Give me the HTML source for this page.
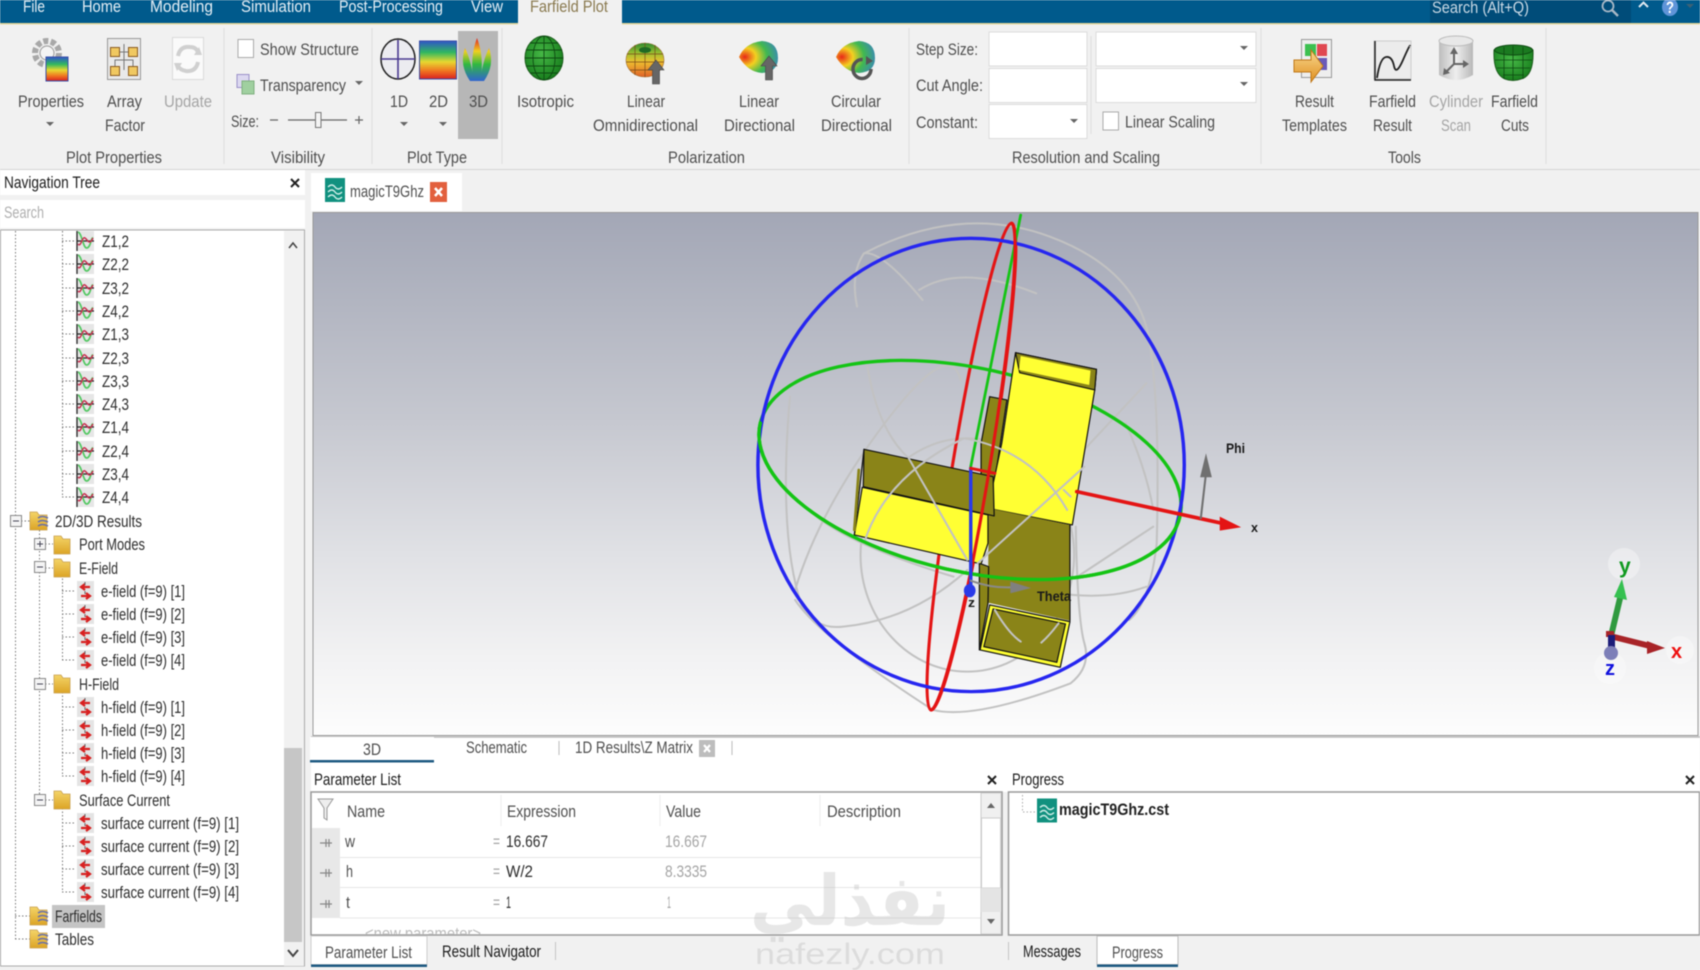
<!DOCTYPE html>
<html><head><meta charset="utf-8"><title>Farfield Plot</title>
<style>
html,body{margin:0;padding:0;width:1700px;height:970px;overflow:hidden;background:#f1f1f1}
svg{display:block;filter:blur(.4px)}
text{font-family:"Liberation Sans","DejaVu Sans",sans-serif;font-size:16.5px;fill:#4f4f4f}
.m{fill:#e4eef5}.d{fill:#2e2e2e}.g{fill:#a5a5a5}.k{fill:#1c1c1c}
</style></head><body>
<svg xmlns="http://www.w3.org/2000/svg" width="1700" height="970" viewBox="0 0 1700 970">
<defs>
<linearGradient id="vp" x1="0" y1="0" x2="0" y2="1"><stop offset="0" stop-color="#a3a7b6"/><stop offset=".4" stop-color="#c6c8d0"/><stop offset=".65" stop-color="#e0e1e5"/><stop offset=".85" stop-color="#f2f2f3"/><stop offset="1" stop-color="#fdfdfd"/></linearGradient>
<linearGradient id="rb" x1="0" y1="0" x2="0" y2="1"><stop offset="0" stop-color="#2f55c8"/><stop offset=".3" stop-color="#30b860"/><stop offset=".55" stop-color="#e8d830"/><stop offset=".8" stop-color="#f07020"/><stop offset="1" stop-color="#d82020"/></linearGradient>
<linearGradient id="lobe" gradientUnits="userSpaceOnUse" x1="0" y1="38" x2="0" y2="82"><stop offset="0" stop-color="#e02020"/><stop offset=".3" stop-color="#f0d020"/><stop offset=".6" stop-color="#30b840"/><stop offset="1" stop-color="#3060d8"/></linearGradient>
<radialGradient id="sph" cx=".45" cy=".4" r=".65"><stop offset="0" stop-color="#46b846"/><stop offset="1" stop-color="#157a1a"/></radialGradient>
<radialGradient id="blob" cx=".15" cy=".5" r=".95"><stop offset="0" stop-color="#e82818"/><stop offset=".3" stop-color="#f4d020"/><stop offset=".6" stop-color="#40b850"/><stop offset="1" stop-color="#3a80c8"/></radialGradient>
<linearGradient id="omni" x1="0" y1="0" x2="0" y2="1"><stop offset="0" stop-color="#2c8a30"/><stop offset=".3" stop-color="#9cc030"/><stop offset=".55" stop-color="#eec030"/><stop offset="1" stop-color="#e06028"/></linearGradient>
<linearGradient id="fold" x1="0" y1="0" x2="0" y2="1"><stop offset="0" stop-color="#f4d468"/><stop offset="1" stop-color="#dca426"/></linearGradient>
<linearGradient id="cyl" x1="0" y1="0" x2="1" y2="0"><stop offset="0" stop-color="#bdbdbd"/><stop offset=".5" stop-color="#eee"/><stop offset="1" stop-color="#b8b8b8"/></linearGradient>
<linearGradient id="orng" x1="0" y1="0" x2="0" y2="1"><stop offset="0" stop-color="#f8d890"/><stop offset="1" stop-color="#e09020"/></linearGradient>
<g id="zi"><rect x="-8" y="-10" width="17" height="20" fill="#e6e6e6"/><path d="M-8-10V10M-8 0H9" stroke="#222" stroke-width="1.3" fill="none"/><path d="M-7-9C-3-8-2 8 2 7S6-4 8-3" stroke="#50c860" stroke-width="1.6" fill="none"/><path d="M-7 3C-4 7-3-5 0-3S4 5 8-3" stroke="#c83050" stroke-width="1.5" fill="none"/></g>
<g id="fi"><rect x="-8" y="-10" width="17" height="20" fill="#e4e4e4"/><path d="M5-4H-3M0-7L-4-4L0-1" stroke="#d82020" stroke-width="2.2" fill="none"/><path d="M-4 5H4M1 2L5 5L1 8" stroke="#d82020" stroke-width="2.2" fill="none"/><path d="M0-9V-6M0 0V3" stroke="#666" stroke-width="1"/></g>
<g id="fo"><path d="M-8-9H-1L1-6H8V9H-8Z" fill="url(#fold)" stroke="#c8a050" stroke-width=".8"/></g>
<g id="fr"><path d="M-9-9H-2L0-6H8V9H-9Z" fill="url(#fold)" stroke="#c8a050" stroke-width=".8"/><path d="M-1-3Q3-6 9-3M-1 1Q3-2 9 1M-1 5Q3 2 9 5" stroke="#6a70a8" stroke-width="1.6" fill="none"/></g>
<g id="teal"><rect x="-10" y="-12" width="20" height="24" fill="#11917f"/><path d="M-7-3Q-3-7 0-3T7-3M-7 2Q-3-2 0 2T7 2M-7 7Q-3 3 0 7T7 7" stroke="#cfeee8" stroke-width="1.4" fill="none"/></g>
<path id="ar" d="M-4-2H4L0 2Z" fill="#666"/>
<path id="up" d="M0-12L8-2H3.500V12H-3.500V-2H-8Z" fill="#666" stroke="#444" stroke-width=".6"/>
</defs>

<rect width="1700" height="970" fill="#f1f1f1"/>
<!-- title bar -->
<rect width="1700" height="23" fill="#005a8c"/>
<rect y="23" width="1700" height="1.500" fill="#e4d79c"/>
<rect x="1430" width="201" height="23" fill="#004c79"/>
<rect x="518" width="104" height="25" fill="#f1f1f1"/>
<text class="m" x="23" y="12" textLength="22" lengthAdjust="spacingAndGlyphs">File</text>
<text class="m" x="82" y="12" textLength="39" lengthAdjust="spacingAndGlyphs">Home</text>
<text class="m" x="150" y="12" textLength="63" lengthAdjust="spacingAndGlyphs">Modeling</text>
<text class="m" x="241" y="12" textLength="70" lengthAdjust="spacingAndGlyphs">Simulation</text>
<text class="m" x="339" y="12" textLength="104" lengthAdjust="spacingAndGlyphs">Post-Processing</text>
<text class="m" x="471" y="12" textLength="32" lengthAdjust="spacingAndGlyphs">View</text>
<text x="530" y="12" textLength="78" lengthAdjust="spacingAndGlyphs" style="fill:#8a7a50">Farfield Plot</text>
<text x="1432" y="13" textLength="97" lengthAdjust="spacingAndGlyphs" style="fill:#c8d8e4">Search (Alt+Q)</text>
<circle cx="1608" cy="6" r="5.500" fill="none" stroke="#a8b8c6" stroke-width="1.800"/><path d="M1612 10L1618 16" stroke="#a8b8c6" stroke-width="2.400"/>
<path d="M1639 7L1643.500 2.500L1648 7" stroke="#e0e8f0" stroke-width="2" fill="none"/>
<ellipse cx="1670" cy="7" rx="8" ry="9" fill="#5f94d8"/><text x="1666" y="13" textLength="8" lengthAdjust="spacingAndGlyphs" style="fill:#fff;font-weight:bold">?</text>
<use href="#ar" x="1690" y="6" opacity=".6"/>

<!-- ribbon bottom + separators -->
<rect y="169" width="1700" height="1" fill="#d4d4d4"/>
<path d="M224 28V164M372 28V164M502 28V164M909 28V164M1261 28V164M1546 28V164M1091 36V134" stroke="#dcdcdc" stroke-width="1"/>

<!-- Properties -->
<circle cx="47" cy="53" r="12" fill="#eee" stroke="#a8a8a8" stroke-width="6" stroke-dasharray="5 2.500"/>
<circle cx="47" cy="53" r="7" fill="#f4f4f4" stroke="#999" stroke-width="1"/>
<rect x="46" y="57" width="22" height="24" fill="url(#rb)" stroke="#3a4fa8" stroke-width="1"/>
<text x="18" y="107" textLength="66" lengthAdjust="spacingAndGlyphs">Properties</text><use href="#ar" x="50" y="124"/>
<!-- Array -->
<rect x="107.500" y="38.500" width="33" height="41" fill="#e9e9e9" stroke="#999"/>
<path d="M124 44V70M115 52H133M115 70V60H133V70" stroke="#777" fill="none"/>
<g fill="#f0c860" stroke="#8a5a20"><rect x="110.500" y="47.500" width="9" height="9"/><rect x="128.500" y="47.500" width="9" height="9"/><rect x="110.500" y="66.500" width="9" height="9"/><rect x="128.500" y="66.500" width="9" height="9"/></g>
<text x="107" y="107" textLength="35" lengthAdjust="spacingAndGlyphs">Array</text><text x="105" y="131" textLength="40" lengthAdjust="spacingAndGlyphs">Factor</text>
<!-- Update -->
<rect x="172.500" y="37.500" width="31" height="42" fill="#fafafa" stroke="#dadada"/>
<path d="M178 56Q180 46 190 47Q196 47 198 52M198 62Q196 72 186 71Q180 70 178 66" stroke="#d0d0d0" stroke-width="4" fill="none"/>
<path d="M194 55L202 55L199 47ZM182 63L174 63L177 71Z" fill="#d0d0d0"/>
<text class="g" x="164" y="107" textLength="48" lengthAdjust="spacingAndGlyphs">Update</text>
<!-- Visibility -->
<rect x="238" y="39.500" width="15.500" height="18" fill="#fff" stroke="#aaa"/>
<text x="260" y="55" textLength="99" lengthAdjust="spacingAndGlyphs">Show Structure</text>
<rect x="237" y="74.500" width="12" height="13" fill="#dcd8f0" stroke="#9a90c8"/><rect x="242" y="81" width="12" height="13" fill="#a0d0a0" stroke="#80b080"/>
<text x="260" y="91" textLength="86" lengthAdjust="spacingAndGlyphs">Transparency</text><use href="#ar" x="359" y="83"/>
<text x="231" y="127" textLength="28" lengthAdjust="spacingAndGlyphs">Size:</text>
<path d="M270 120H278M288 120H347M355 120H363M359 116V124" stroke="#666" stroke-width="1.200"/>
<rect x="315.500" y="112.500" width="5.500" height="15" fill="#f4f4f4" stroke="#777"/>
<text x="271" y="163" textLength="54" lengthAdjust="spacingAndGlyphs">Visibility</text>
<text x="66" y="163" textLength="96" lengthAdjust="spacingAndGlyphs">Plot Properties</text>
<!-- Plot type -->
<rect x="458" y="31" width="40" height="108" fill="#b7b7b7"/>
<ellipse cx="398" cy="59" rx="17" ry="20" fill="#ececf0" stroke="#222" stroke-width="1.500"/>
<path d="M381 59H415M398 40V79" stroke="#4a3a90" stroke-width="1.600"/>
<rect x="419.500" y="41" width="37" height="38" fill="url(#rb)" stroke="#3a4fa8"/>
<g fill="url(#lobe)"><path d="M465 48Q471 60 474 81H470Q459 65 465 48Z"/><path d="M489 48Q483 60 480 81H484Q495 65 489 48Z"/><path d="M477 38Q484 56 481 81H473Q470 56 477 38Z"/></g>
<text x="390" y="107" textLength="18" lengthAdjust="spacingAndGlyphs">1D</text><use href="#ar" x="404" y="124"/>
<text x="429" y="107" textLength="19" lengthAdjust="spacingAndGlyphs">2D</text><use href="#ar" x="443" y="124"/>
<text x="469" y="107" textLength="19" lengthAdjust="spacingAndGlyphs">3D</text>
<text x="407" y="163" textLength="60" lengthAdjust="spacingAndGlyphs">Plot Type</text>
<!-- Polarization -->
<ellipse cx="544" cy="58" rx="19" ry="22" fill="url(#sph)" stroke="#1c5c1c"/>
<g fill="none" stroke="#0e4a12" stroke-width=".9"><ellipse cx="544" cy="58" rx="11" ry="22"/><path d="M544 36V80M526 50H562M525 58H563M526 66H562M530 43H558M530 73H558"/></g>
<text x="517" y="107" textLength="57" lengthAdjust="spacingAndGlyphs">Isotropic</text>
<ellipse cx="645" cy="60" rx="19" ry="17" fill="url(#omni)" stroke="#a07030" stroke-width=".6"/>
<path d="M627 54H663M626 62H664M630 70H660M635 45V75M645 43V77M655 45V75" stroke="#7a4a18" stroke-width=".7"/>
<ellipse cx="645" cy="50" rx="6" ry="3" fill="#1f6a24"/>
<use href="#up" transform="translate(656 72)"/>
<text x="627" y="107" textLength="38" lengthAdjust="spacingAndGlyphs">Linear</text><text x="593" y="131" textLength="105" lengthAdjust="spacingAndGlyphs">Omnidirectional</text>
<path d="M739 57Q745 43 762 41Q778 42 778 58Q778 72 762 73Q748 72 739 57Z" fill="url(#blob)"/>
<use href="#up" transform="translate(769 68)"/>
<text x="739" y="107" textLength="40" lengthAdjust="spacingAndGlyphs">Linear</text><text x="724" y="131" textLength="71" lengthAdjust="spacingAndGlyphs">Directional</text>
<path d="M836 57Q842 43 859 41Q875 42 875 58Q875 72 859 73Q845 72 836 57Z" fill="url(#blob)"/>
<ellipse cx="862" cy="69" rx="9" ry="9.500" fill="none" stroke="#555" stroke-width="3.500" stroke-dasharray="44 16"/><path d="M866 56L873 61L866 65Z" fill="#555"/>
<text x="831" y="107" textLength="50" lengthAdjust="spacingAndGlyphs">Circular</text><text x="821" y="131" textLength="71" lengthAdjust="spacingAndGlyphs">Directional</text>
<text x="668" y="163" textLength="77" lengthAdjust="spacingAndGlyphs">Polarization</text>
<!-- Resolution -->
<text x="916" y="55" textLength="62" lengthAdjust="spacingAndGlyphs">Step Size:</text>
<text x="916" y="91" textLength="67" lengthAdjust="spacingAndGlyphs">Cut Angle:</text>
<text x="916" y="128" textLength="62" lengthAdjust="spacingAndGlyphs">Constant:</text>
<g fill="#fff" stroke="#dcdcdc"><rect x="989" y="32" width="98" height="34"/><rect x="989" y="68.500" width="98" height="34"/><rect x="989" y="104.500" width="98" height="34"/><rect x="1096" y="32" width="160" height="34"/><rect x="1096" y="68.500" width="160" height="34"/></g>
<use href="#ar" x="1074" y="121"/><use href="#ar" x="1244" y="48"/><use href="#ar" x="1244" y="84"/>
<rect x="1103" y="112" width="15.500" height="18" fill="#fff" stroke="#aaa"/>
<text x="1125" y="127.500" textLength="90" lengthAdjust="spacingAndGlyphs">Linear Scaling</text>
<text x="1012" y="163" textLength="148" lengthAdjust="spacingAndGlyphs">Resolution and Scaling</text>
<!-- Tools -->
<g transform="translate(6 0)">
<rect x="1295.500" y="39.500" width="30" height="38" fill="#eee" stroke="#999"/>
<rect x="1299" y="44" width="11" height="12" fill="#3cc050"/><rect x="1311" y="44" width="10" height="12" fill="#e04850"/><rect x="1311" y="58" width="10" height="12" fill="#6a5ab8"/>
<path d="M1288 60H1305V50L1317 66L1305 82V72H1288Z" fill="url(#orng)" stroke="#c07818"/>
</g>
<text x="1295" y="107" textLength="39" lengthAdjust="spacingAndGlyphs">Result</text><text x="1282" y="131" textLength="65" lengthAdjust="spacingAndGlyphs">Templates</text>
<g transform="translate(9 0)">
<rect x="1365" y="41" width="37" height="38" fill="#ececec" stroke="#ccc"/>
<path d="M1366 41V80H1402" stroke="#222" stroke-width="1.500" fill="none"/>
<path d="M1368 78Q1371 58 1377 57T1385 66T1394 60T1401 46" stroke="#222" stroke-width="1.800" fill="none"/>
</g>
<text x="1369" y="107" textLength="47" lengthAdjust="spacingAndGlyphs">Farfield</text><text x="1373" y="131" textLength="39" lengthAdjust="spacingAndGlyphs">Result</text>
<g transform="translate(11 0)">
<path d="M1428 41V75Q1445 85 1462 75V41Z" fill="url(#cyl)"/><ellipse cx="1445" cy="41" rx="17" ry="5" fill="#e8e8e8" stroke="#bbb"/>
<path d="M1443 50V64L1434 73M1443 64H1454" stroke="#666" stroke-width="2" fill="none"/><path d="M1443 47L1439 54H1447ZM1458 64L1452 60V68ZM1432 75L1433 68L1439 73Z" fill="#666"/>
</g>
<text class="g" x="1429" y="107" textLength="54" lengthAdjust="spacingAndGlyphs">Cylinder</text><text class="g" x="1441" y="131" textLength="30" lengthAdjust="spacingAndGlyphs">Scan</text>
<g transform="translate(13 0)">
<path d="M1481 50Q1500 42 1520 50Q1521 76 1508 79Q1500 82 1492 79Q1480 74 1481 50Z" fill="url(#sph)" stroke="#1c5c1c"/>
<ellipse cx="1500.500" cy="50" rx="19" ry="5" fill="#1b7a20" stroke="#0e4a12"/>
<path d="M1482 60H1519M1484 68H1517M1490 75H1511M1491 47V79M1500 46V80M1510 47V79" stroke="#0e4a12" stroke-width=".8"/>
</g>
<text x="1491" y="107" textLength="47" lengthAdjust="spacingAndGlyphs">Farfield</text><text x="1501" y="131" textLength="28" lengthAdjust="spacingAndGlyphs">Cuts</text>
<text x="1388" y="163" textLength="33" lengthAdjust="spacingAndGlyphs">Tools</text>

<!-- nav header -->
<rect x="0" y="170" width="305" height="25" fill="#fff"/>
<text class="k" x="4" y="188" textLength="96" lengthAdjust="spacingAndGlyphs">Navigation Tree</text>
<path d="M291 179L299 187M299 179L291 187" stroke="#222" stroke-width="2"/>
<rect x="0" y="200" width="305" height="28" fill="#fff"/>
<text x="4" y="218" textLength="40" lengthAdjust="spacingAndGlyphs" style="fill:#b0b0b0">Search</text>
<!-- doc tab -->
<rect x="311" y="173" width="151" height="38" fill="#fff"/>
<use href="#teal" x="335" y="190"/>
<text x="350" y="197" textLength="74" lengthAdjust="spacingAndGlyphs">magicT9Ghz</text>
<rect x="430" y="182" width="17" height="20" fill="#e2603e"/><path d="M435 188L442 196M442 188L435 196" stroke="#fff" stroke-width="2.500"/>

<!-- viewport -->
<rect x="313" y="212.500" width="1385" height="523" fill="url(#vp)" stroke="#999"/>
<rect x="311" y="736.500" width="1389" height="31.500" fill="#fff"/>
<path d="M311 737H1700" stroke="#bbb" stroke-width="1.500"/>

<g transform="translate(740 210) scale(.3444 .3333)" fill="none" stroke-linecap="round">
 <g stroke="#c2c2c2" stroke-width="6">
  <ellipse cx="660" cy="1035" rx="310" ry="350"/>
  <path d="M340 290Q320 190 360 130Q410 120 530 270M520 240Q640 160 860 250M360 130Q640-20 900 80T1190 400M1190 400Q1220 600 1210 1000Q1190 1180 1130 1230"/>
  <path d="M160 1170Q230 1280 560 1500Q680 1530 960 1420Q1020 1370 1000 1300T975 950"/>
  <path d="M145 560Q110 980 180 1190Q220 1260 300 1250Q500 1230 660 1080"/>
  <path d="M370 470Q400 660 490 745T660 1050M690 1060L1180 520M160 1140Q230 900 420 640T640 510M620 1100Q300 1000 200 900M980 1100L1200 950"/>
  <path d="M690 1090Q1000 1200 1180 1130M1120 640Q1180 780 1200 900"/>
 </g>
 <ellipse cx="672" cy="770" rx="55" ry="740" transform="rotate(9.100 672 770)" stroke="#e41414" stroke-width="9"/>
 <ellipse cx="668" cy="780" rx="625" ry="305" transform="rotate(13 668 780)" stroke="#14c414" stroke-width="10"/>
 <path d="M815 15L670 770" stroke="#14c414" stroke-width="8"/>
 <ellipse cx="671" cy="765" rx="619" ry="680" stroke="#2626f0" stroke-width="10"/>

 <g stroke="#111" stroke-width="3.500" stroke-linejoin="round">
  <path d="M725 560L775 570L730 880L700 830L700 700Z" fill="#8a8418"/>
  <path d="M800 428L1035 478L1030 540L965 945L720 895L760 700Z" fill="#ffff33"/>
  <path d="M800 428L812 488L1030 540L1035 478Z" fill="#8a8418"/>
  <path d="M815 438L1018 482L1014 525L810 480Z" fill="#ffff33" stroke="none"/>
  <path d="M722 895L958 945L958 1232L720 1178Z" fill="#8a8418" stroke="none"/>
  <path d="M958 945V1232" fill="none"/>
  <path d="M695 1060L722 1070L720 1180L695 1320Z" fill="#8a8418"/>
  <path d="M725 1185L958 1235L930 1372L697 1320Z" fill="#ffff33"/>
  <path d="M735 1197L945 1242L920 1357L708 1310Z" fill="#8a8418"/>
  <path d="M360 718L735 800L738 918L358 830Z" fill="#8a8418"/>
  <path d="M355 832L720 915L720 1000L700 1062L332 975Z" fill="#ffff33"/>
  <path d="M360 718L332 975" fill="none"/>
  <path d="M345 780L332 960" stroke="#8a8418" stroke-width="8"/>
 </g>
 <g stroke="#c2c2c2" stroke-width="6">
 <path d="M740 1200Q780 1270 815 1295M875 1298Q900 1275 925 1240M490 745L660 1050M690 1060L1000 770M940 840L960 860"/>
 <path d="M360 1000Q420 800 650 685Q850 720 950 900"/>
 </g>
 <path d="M789 40A55 740 9.100 0 1 555 1500" stroke="#e41414" stroke-width="9"/>
 <path d="M59 639A625 305 13 0 0 1277 921" stroke="#14c414" stroke-width="10"/>
 <path d="M670 775V1140" stroke="#2a3ae8" stroke-width="10"/>
 <path d="M670 775L740 790" stroke="#e41414" stroke-width="9"/>
 <ellipse cx="667" cy="1142" rx="17" ry="20" fill="#2a3ae8"/>
 <path d="M978 845L1400 940" stroke="#e41414" stroke-width="11"/>
 <path d="M1393 920L1455 952L1393 962Z" fill="#e41414"/>
 <path d="M1338 925Q1345 860 1353 790" stroke="#707070" stroke-width="6"/>
 <path d="M1353 730L1370 802H1336Z" fill="#707070"/>
 <path d="M670 1112Q730 1135 790 1132" stroke="#8a8a8a" stroke-width="6"/>
 <path d="M845 1134L785 1115V1150Z" fill="#808080"/>
</g>
<text x="1226" y="453" textLength="19" lengthAdjust="spacingAndGlyphs" style="font-size:14px;font-weight:bold;fill:#1a1a1a">Phi</text>
<text x="1251" y="532" textLength="7" lengthAdjust="spacingAndGlyphs" style="font-size:13px;font-weight:bold;fill:#1a1a1a">x</text>
<text x="1037" y="601" textLength="34" lengthAdjust="spacingAndGlyphs" style="font-size:14px;font-weight:bold;fill:#1a1a1a">Theta</text>
<text x="968" y="607" textLength="7" lengthAdjust="spacingAndGlyphs" style="font-size:13px;font-weight:bold;fill:#1a1a1a">z</text>

<!-- gizmo -->
<circle cx="1624" cy="564" r="16" fill="#fff" opacity=".35"/><circle cx="1680" cy="650" r="14" fill="#fff" opacity=".35"/><circle cx="1610" cy="668" r="16" fill="#fff" opacity=".3"/>
<path d="M1611 636L1622 590" stroke="#2f9a3f" stroke-width="6"/><path d="M1622 579L1627 600L1614 597Z" fill="#35c050"/>
<path d="M1610 636L1650 646" stroke="#a82428" stroke-width="6"/><path d="M1665 648L1647 641V654Z" fill="#a82428"/>
<rect x="1606" y="631" width="8" height="6" fill="#a82428"/><rect x="1608" y="635" width="7" height="14" fill="#1c1c78"/>
<circle cx="1611" cy="653" r="7" fill="#7d7fb8"/>
<text x="1619" y="573" style="font-size:21px;font-weight:bold;fill:#109a20">y</text>
<text x="1671" y="658" style="font-size:20px;font-weight:bold;fill:#ee1010">x</text>
<text x="1605" y="675" style="font-size:20px;font-weight:bold;fill:#1010dd">z</text>

<!-- 3D tabs -->
<rect x="310" y="737" width="124" height="23" fill="#fff"/>
<rect x="310" y="760" width="124" height="2.500" fill="#1e5a82"/>
<text x="363" y="755" textLength="18" lengthAdjust="spacingAndGlyphs">3D</text>
<text x="466" y="753" textLength="61" lengthAdjust="spacingAndGlyphs">Schematic</text>
<path d="M559 741V755M732 741V755" stroke="#bbb"/>
<text x="575" y="753" textLength="118" lengthAdjust="spacingAndGlyphs">1D Results\Z Matrix</text>
<rect x="699" y="740" width="16" height="17" fill="#bdbdbd"/><path d="M704 745L710 752M710 745L704 752" stroke="#fff" stroke-width="2.200"/>

<!-- Navigation tree panel -->
<rect x=".5" y="230" width="304" height="736" fill="#fff" stroke="#aaa"/>
<rect x="284" y="231" width="20" height="735" fill="#f1f1f1"/>
<rect x="284" y="748" width="18" height="194" fill="#c6c6c6"/>
<path d="M289 248L293 243L297 248" stroke="#444" stroke-width="1.500" fill="none"/>
<path d="M288 950L293 956L298 950" stroke="#444" stroke-width="2" fill="none"/>
<g stroke="#777" stroke-dasharray="1.500 2" stroke-width="1" fill="none">
 <path d="M15.500 231V939M39.500 530V799M62.500 231V497M62.500 575V660M62.500 692V776M62.500 808V892"/>
 <path d="M62 241H76M62 264H76M62 288H76M62 311H76M62 334H76M62 358H76M62 381H76M62 404H76M62 427H76M62 451H76M62 474H76M62 497H76"/>
 <path d="M62 591H76M62 614H76M62 637H76M62 660H76M62 707H76M62 730H76M62 753H76M62 776H76M62 823H76M62 846H76M62 869H76M62 892H76"/>
 <path d="M21 521H30M45 544H53M45 568H53M45 684H53M45 800H53M15 916H30M15 939H30"/>
</g>
<g fill="#f4f4f4" stroke="#888">
 <rect x="10.500" y="515.500" width="11" height="11"/><rect x="34.500" y="538.500" width="11" height="11"/><rect x="34.500" y="561.500" width="11" height="11"/><rect x="34.500" y="678.500" width="11" height="11"/><rect x="34.500" y="794.500" width="11" height="11"/>
</g>
<path d="M13 521H19M37 544H43M40 541V547M37 567H43M37 684H43M37 800H43" stroke="#445" stroke-width="1"/>

<g><use href="#zi" x="85" y="241"/><use href="#zi" x="85" y="264"/><use href="#zi" x="85" y="288"/><use href="#zi" x="85" y="311"/><use href="#zi" x="85" y="334"/><use href="#zi" x="85" y="358"/><use href="#zi" x="85" y="381"/><use href="#zi" x="85" y="404"/><use href="#zi" x="85" y="427"/><use href="#zi" x="85" y="451"/><use href="#zi" x="85" y="474"/><use href="#zi" x="85" y="497"/>
<use href="#fi" x="85" y="591"/><use href="#fi" x="85" y="614"/><use href="#fi" x="85" y="637"/><use href="#fi" x="85" y="660"/><use href="#fi" x="85" y="707"/><use href="#fi" x="85" y="730"/><use href="#fi" x="85" y="753"/><use href="#fi" x="85" y="776"/><use href="#fi" x="85" y="823"/><use href="#fi" x="85" y="846"/><use href="#fi" x="85" y="869"/><use href="#fi" x="85" y="892"/>
<use href="#fr" x="39" y="521"/><use href="#fr" x="39" y="916"/><use href="#fr" x="39" y="939"/>
<use href="#fo" x="62" y="545"/><use href="#fo" x="62" y="568"/><use href="#fo" x="62" y="684"/><use href="#fo" x="62" y="800"/></g>

<rect x="52" y="905" width="53" height="23" fill="#c4c4c4"/>
<g>
<text class="d" x="102" y="247" textLength="27" lengthAdjust="spacingAndGlyphs">Z1,2</text>
<text class="d" x="102" y="270" textLength="27" lengthAdjust="spacingAndGlyphs">Z2,2</text>
<text class="d" x="102" y="294" textLength="27" lengthAdjust="spacingAndGlyphs">Z3,2</text>
<text class="d" x="102" y="317" textLength="27" lengthAdjust="spacingAndGlyphs">Z4,2</text>
<text class="d" x="102" y="340" textLength="27" lengthAdjust="spacingAndGlyphs">Z1,3</text>
<text class="d" x="102" y="364" textLength="27" lengthAdjust="spacingAndGlyphs">Z2,3</text>
<text class="d" x="102" y="387" textLength="27" lengthAdjust="spacingAndGlyphs">Z3,3</text>
<text class="d" x="102" y="410" textLength="27" lengthAdjust="spacingAndGlyphs">Z4,3</text>
<text class="d" x="102" y="433" textLength="27" lengthAdjust="spacingAndGlyphs">Z1,4</text>
<text class="d" x="102" y="457" textLength="27" lengthAdjust="spacingAndGlyphs">Z2,4</text>
<text class="d" x="102" y="480" textLength="27" lengthAdjust="spacingAndGlyphs">Z3,4</text>
<text class="d" x="102" y="503" textLength="27" lengthAdjust="spacingAndGlyphs">Z4,4</text>
<text class="d" x="55" y="527" textLength="87" lengthAdjust="spacingAndGlyphs">2D/3D Results</text>
<text class="d" x="79" y="550" textLength="66" lengthAdjust="spacingAndGlyphs">Port Modes</text>
<text class="d" x="79" y="574" textLength="39" lengthAdjust="spacingAndGlyphs">E-Field</text>
<text class="d" x="101" y="597" textLength="84" lengthAdjust="spacingAndGlyphs">e-field (f=9) [1]</text>
<text class="d" x="101" y="620" textLength="84" lengthAdjust="spacingAndGlyphs">e-field (f=9) [2]</text>
<text class="d" x="101" y="643" textLength="84" lengthAdjust="spacingAndGlyphs">e-field (f=9) [3]</text>
<text class="d" x="101" y="666" textLength="84" lengthAdjust="spacingAndGlyphs">e-field (f=9) [4]</text>
<text class="d" x="79" y="690" textLength="40" lengthAdjust="spacingAndGlyphs">H-Field</text>
<text class="d" x="101" y="713" textLength="84" lengthAdjust="spacingAndGlyphs">h-field (f=9) [1]</text>
<text class="d" x="101" y="736" textLength="84" lengthAdjust="spacingAndGlyphs">h-field (f=9) [2]</text>
<text class="d" x="101" y="759" textLength="84" lengthAdjust="spacingAndGlyphs">h-field (f=9) [3]</text>
<text class="d" x="101" y="782" textLength="84" lengthAdjust="spacingAndGlyphs">h-field (f=9) [4]</text>
<text class="d" x="79" y="806" textLength="91" lengthAdjust="spacingAndGlyphs">Surface Current</text>
<text class="d" x="101" y="829" textLength="138" lengthAdjust="spacingAndGlyphs">surface current (f=9) [1]</text>
<text class="d" x="101" y="852" textLength="138" lengthAdjust="spacingAndGlyphs">surface current (f=9) [2]</text>
<text class="d" x="101" y="875" textLength="138" lengthAdjust="spacingAndGlyphs">surface current (f=9) [3]</text>
<text class="d" x="101" y="898" textLength="138" lengthAdjust="spacingAndGlyphs">surface current (f=9) [4]</text>
<text class="d" x="55" y="922" textLength="47" lengthAdjust="spacingAndGlyphs">Farfields</text>
<text class="d" x="55" y="945" textLength="39" lengthAdjust="spacingAndGlyphs">Tables</text>
</g>

<!-- Parameter list -->
<rect x="311" y="768" width="697" height="24" fill="#fff"/>
<text class="k" x="314" y="785" textLength="87" lengthAdjust="spacingAndGlyphs">Parameter List</text>
<path d="M988 776L996 784M996 776L988 784" stroke="#222" stroke-width="2"/>
<rect x="311" y="792" width="691" height="143" fill="#fff" stroke="#999" stroke-width="1.500"/>
<path d="M501 795V826M660 795V826M820 795V826" stroke="#eee"/>
<path d="M318 799H333L327 808V820L324 818V808Z" fill="#eee" stroke="#999"/>
<text x="347" y="817" textLength="38" lengthAdjust="spacingAndGlyphs">Name</text>
<text x="507" y="817" textLength="69" lengthAdjust="spacingAndGlyphs">Expression</text>
<text x="666" y="817" textLength="35" lengthAdjust="spacingAndGlyphs">Value</text>
<text x="827" y="817" textLength="74" lengthAdjust="spacingAndGlyphs">Description</text>
<rect x="312" y="828" width="28" height="90" fill="#e8e8e8"/>
<path d="M340 857.500H981M340 887.500H981M340 918H981" stroke="#e6e6e6"/>
<g stroke="#888" stroke-width="1.200" fill="none"><path d="M320 843H332M326 839V847M329 839V847M320 873H332M326 869V877M329 869V877M320 904H332M326 900V908M329 900V908"/></g>
<text x="345" y="847" textLength="10" lengthAdjust="spacingAndGlyphs">w</text>
<text x="346" y="877" textLength="7" lengthAdjust="spacingAndGlyphs">h</text>
<text x="346" y="908" textLength="4" lengthAdjust="spacingAndGlyphs">t</text>
<text class="g" x="493" y="847" textLength="7" lengthAdjust="spacingAndGlyphs">=</text><text class="g" x="493" y="877" textLength="7" lengthAdjust="spacingAndGlyphs">=</text><text class="g" x="493" y="908" textLength="7" lengthAdjust="spacingAndGlyphs">=</text>
<text class="d" x="506" y="847" textLength="42" lengthAdjust="spacingAndGlyphs">16.667</text>
<text class="d" x="506" y="877" textLength="27" lengthAdjust="spacingAndGlyphs">W/2</text>
<text class="d" x="506" y="908" textLength="5" lengthAdjust="spacingAndGlyphs">1</text>
<text class="g" x="665" y="847" textLength="42" lengthAdjust="spacingAndGlyphs">16.667</text>
<text class="g" x="665" y="877" textLength="42" lengthAdjust="spacingAndGlyphs">8.3335</text>
<text class="g" x="667" y="908" textLength="4" lengthAdjust="spacingAndGlyphs">1</text>
<clipPath id="npc"><rect x="312" y="919" width="600" height="15"/></clipPath>
<text x="365" y="939" textLength="116" lengthAdjust="spacingAndGlyphs" clip-path="url(#npc)" style="fill:#bbb">&lt;new parameter&gt;</text>
<rect x="981" y="793" width="20" height="141" fill="#f0f0f0" stroke="#ccc"/>
<rect x="981.500" y="818" width="19" height="70" fill="#fff" stroke="#ccc"/>
<rect x="981" y="888" width="20" height="24" fill="#e4e4e4"/>
<path d="M987 808L991 803L995 808ZM987 919L991 924L995 919Z" fill="#666"/>

<!-- Progress panel -->
<rect x="1008" y="768" width="692" height="24" fill="#fff"/>
<text class="k" x="1012" y="785" textLength="52" lengthAdjust="spacingAndGlyphs">Progress</text>
<path d="M1686 776L1694 784M1694 776L1686 784" stroke="#222" stroke-width="2"/>
<rect x="1008.500" y="792" width="691" height="143" fill="#fff" stroke="#999" stroke-width="1.500"/>
<path d="M1022.500 795V812H1036" stroke="#aaa" stroke-dasharray="1.500 2" fill="none"/>
<use href="#teal" x="1047" y="810.500"/>
<text x="1059" y="815" textLength="110" lengthAdjust="spacingAndGlyphs" style="fill:#222;font-weight:bold">magicT9Ghz.cst</text>

<!-- bottom tabs -->
<rect x="311" y="936" width="116" height="28.500" fill="#fff" stroke="#ccc"/>
<rect x="311" y="964.500" width="116" height="2.500" fill="#1e5a82"/>
<text x="325" y="958" textLength="87" lengthAdjust="spacingAndGlyphs">Parameter List</text>
<text class="k" x="442" y="957" textLength="99" lengthAdjust="spacingAndGlyphs">Result Navigator</text>
<path d="M555.500 942V960M1008.500 942V960" stroke="#c4c4c4"/>
<text class="k" x="1023" y="957" textLength="58" lengthAdjust="spacingAndGlyphs">Messages</text>
<rect x="1097" y="936" width="81" height="28.500" fill="#fff" stroke="#bbb"/>
<rect x="1097" y="964.500" width="81" height="2.500" fill="#1e5a82"/>
<text x="1112" y="958" textLength="51" lengthAdjust="spacingAndGlyphs">Progress</text>

<!-- watermark -->
<text x="750" y="925" textLength="200" lengthAdjust="spacingAndGlyphs" style="font-family:'DejaVu Sans',sans-serif;font-size:70px;font-weight:bold;fill:#bbb;opacity:.35">نفذلي</text>
<text x="755" y="964" textLength="190" lengthAdjust="spacingAndGlyphs" style="font-size:30px;fill:#d8d8d8;opacity:.8">nafezly.com</text>
</svg>
</body></html>
